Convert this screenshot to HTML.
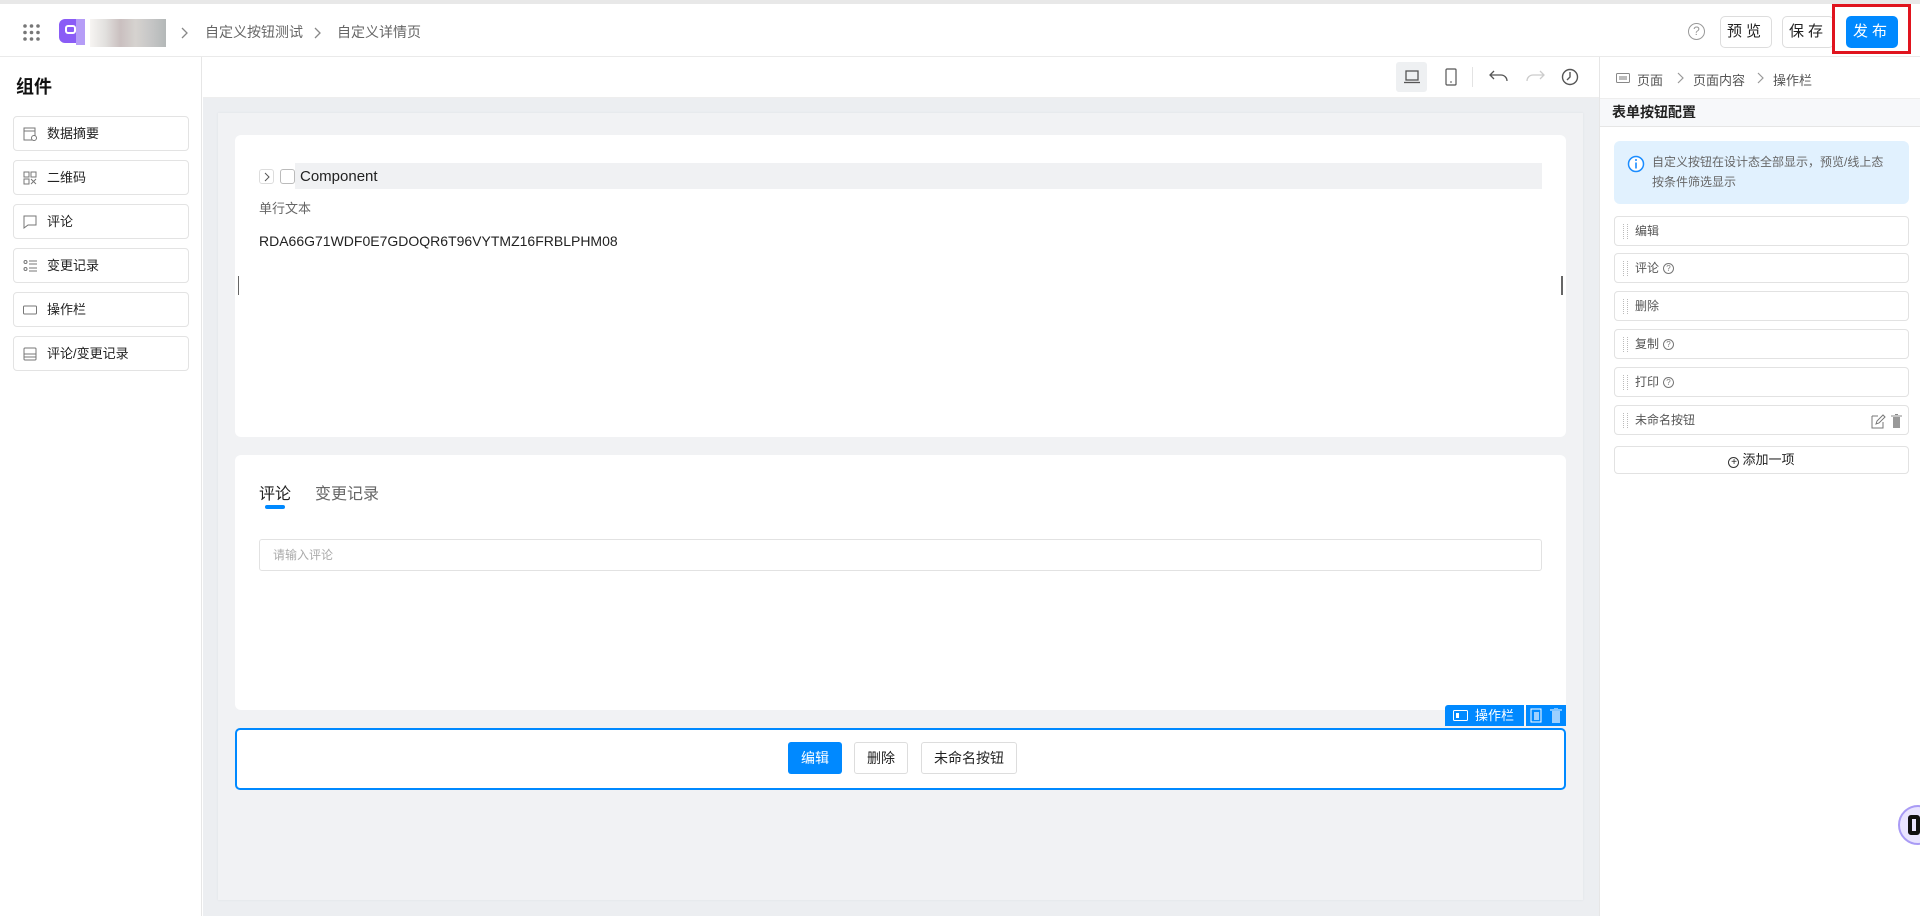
<!DOCTYPE html>
<html><head><meta charset="utf-8"><style>
*{box-sizing:border-box;margin:0;padding:0}
body{width:1920px;height:916px;overflow:hidden;background:#fff;font-family:"Liberation Sans","Noto Sans CJK SC",sans-serif;color:#333;position:relative}
.abs{position:absolute}
.top{left:0;top:0;width:1920px;height:57px;border-top:4px solid #e8e8e8;border-bottom:1px solid #eaeaea;background:#fff}
.crumb{font-size:14px;color:#666;top:18px}
.btn{border:1px solid #ddd;border-radius:5px;font-size:15px;text-align:center;line-height:30px;letter-spacing:4px;color:#222}
.left{left:0;top:57px;width:202px;height:859px;border-right:1px solid #e6e6e6;background:#fff}
.item{left:13px;width:176px;height:35px;border:1px solid #e3e3e3;border-radius:4px;font-size:13px;line-height:33px;padding-left:33px;color:#222}
.item svg{position:absolute;left:9px;top:10px}
.canvas{left:203px;top:98px;width:1396px;height:818px;background:#eceef1}
.card{background:#fff;border-radius:6px}
.right{left:1599px;top:57px;width:321px;height:859px;border-left:1px solid #e6e6e6;background:#fff}
.ritem{left:14px;width:295px;height:30px;border:1px solid #e2e2e2;border-radius:4px;font-size:12px;color:#555;line-height:28px;padding-left:20px}
.ritem:before{content:"";position:absolute;left:8px;top:7px;width:3px;height:15px;border-left:1px dotted #bbb;border-right:1px dotted #bbb}
.q{display:inline-block;width:11px;height:11px;border:1px solid #777;border-radius:50%;font-size:8px;line-height:9px;text-align:center;margin-left:4px;vertical-align:1px;color:#777}
</style></head><body>
<div class="abs top">
  <svg class="abs" style="left:23px;top:20px" width="17" height="17"><g fill="#777"><circle cx="2" cy="2" r="1.8"/><circle cx="8.5" cy="2" r="1.8"/><circle cx="15" cy="2" r="1.8"/><circle cx="2" cy="8.5" r="1.8"/><circle cx="8.5" cy="8.5" r="1.8"/><circle cx="15" cy="8.5" r="1.8"/><circle cx="2" cy="15" r="1.8"/><circle cx="8.5" cy="15" r="1.8"/><circle cx="15" cy="15" r="1.8"/></g></svg>
  <div class="abs" style="left:59px;top:15px;width:24px;height:24px;border-radius:6px;background:#8a5cf6"></div>
  <div class="abs" style="left:65px;top:21px;width:11px;height:9px;border:2px solid #fff;border-radius:3px"></div>
  <div class="abs" style="left:76px;top:15px;width:9px;height:26px;background:#b59cf7"></div>
  <div class="abs" style="left:90px;top:15px;width:76px;height:28px;background:linear-gradient(90deg,#f4f1ee,#d8d6d3,#b8aaaa,#c8c4c0,#b3b3b3,#9aa0a0);opacity:.75"></div>
  <svg class="abs" style="left:181px;top:23px" width="8" height="12"><path d="M1 1l5 5-5 5" fill="none" stroke="#888" stroke-width="1.3"/></svg>
  <div class="abs crumb" style="left:205px">自定义按钮测试</div>
  <svg class="abs" style="left:314px;top:23px" width="8" height="12"><path d="M1 1l5 5-5 5" fill="none" stroke="#888" stroke-width="1.3"/></svg>
  <div class="abs crumb" style="left:337px">自定义详情页</div>
  <div class="abs" style="left:1688px;top:19px;width:17px;height:17px;border:1.5px solid #999;border-radius:50%;font-size:12px;color:#999;text-align:center;line-height:14px">?</div>
  <div class="abs btn" style="left:1720px;top:12px;width:52px;height:32px">预览</div>
  <div class="abs btn" style="left:1782px;top:12px;width:52px;height:32px">保存</div>
  <div class="abs btn" style="left:1846px;top:12px;width:52px;height:32px;background:#0089ff;border-color:#0089ff;color:#fff">发布</div>
  <div class="abs" style="left:1832px;top:0px;width:79px;height:50px;border:3px solid #e0141e"></div>
</div>

<div class="abs left">
  <div class="abs" style="left:16px;top:16px;font-size:18px;font-weight:bold;color:#111">组件</div>
  <div class="abs item" style="top:59px"><svg width="14" height="14"><rect x="1" y="1" width="11" height="12" fill="none" stroke="#777"/><line x1="1" y1="4" x2="12" y2="4" stroke="#777"/><circle cx="11" cy="11" r="2.5" fill="#fff" stroke="#777"/></svg>数据摘要</div>
  <div class="abs item" style="top:103px"><svg width="14" height="14"><g fill="none" stroke="#777"><rect x="1" y="1" width="5" height="5"/><rect x="8" y="1" width="5" height="5"/><rect x="1" y="8" width="5" height="5"/><path d="M8 8l5 5M13 8l-5 5"/></g></svg>二维码</div>
  <div class="abs item" style="top:147px"><svg width="14" height="14"><path d="M1 1h12v9H5l-4 3z" fill="none" stroke="#777"/></svg>评论</div>
  <div class="abs item" style="top:191px"><svg width="14" height="14"><g fill="none" stroke="#777"><circle cx="2.5" cy="3" r="1.5"/><circle cx="2.5" cy="10" r="1.5"/><path d="M6 2h8M6 5h8M6 9h8M6 12h8"/></g></svg>变更记录</div>
  <div class="abs item" style="top:235px"><svg width="14" height="14"><rect x="0.5" y="3" width="13" height="8" rx="1" fill="none" stroke="#777"/></svg>操作栏</div>
  <div class="abs item" style="top:279px"><svg width="14" height="14"><g fill="none" stroke="#777"><rect x="1" y="1" width="12" height="12" rx="1"/><path d="M1 7h12M1 10h12"/></g></svg>评论/变更记录</div>
</div>

<div class="abs" style="left:203px;top:57px;width:1396px;height:41px;background:#fff;border-bottom:1px solid #eee">
  <div class="abs" style="left:1193px;top:5px;width:31px;height:30px;background:#eef0f2;border-radius:3px"></div>
  <svg class="abs" style="left:1200px;top:12px" width="18" height="16"><rect x="3" y="2" width="12" height="9" fill="none" stroke="#555" stroke-width="1.3"/><line x1="1" y1="13.5" x2="17" y2="13.5" stroke="#555" stroke-width="1.3"/></svg>
  <svg class="abs" style="left:1242px;top:11px" width="12" height="18"><rect x="1" y="1" width="10" height="16" rx="1" fill="none" stroke="#555" stroke-width="1.2"/><line x1="5" y1="14" x2="7" y2="14" stroke="#555"/></svg>
  <div class="abs" style="left:1269px;top:10px;width:1px;height:20px;background:#e3e3e3"></div>
  <svg class="abs" style="left:1286px;top:12px" width="20" height="16"><path d="M5 2L1 6l4 4M1 6h11a6 6 0 0 1 6 6" fill="none" stroke="#555" stroke-width="1.3"/></svg>
  <svg class="abs" style="left:1322px;top:12px" width="20" height="16"><path d="M15 2l4 4-4 4M19 6H8a6 6 0 0 0-6 6" fill="none" stroke="#ccc" stroke-width="1.3"/></svg>
  <svg class="abs" style="left:1358px;top:11px" width="18" height="18"><circle cx="9" cy="9" r="7.5" fill="none" stroke="#555" stroke-width="1.4"/><path d="M9 4v5l-3 3" fill="none" stroke="#555" stroke-width="1.4"/></svg>
</div>

<div class="abs canvas">
  <div class="abs" style="left:15px;top:15px;width:1365px;height:787px;background:#f1f2f4;box-shadow:0 0 2px #dde0e4"></div>
  <div class="abs card" style="left:32px;top:37px;width:1331px;height:302px">
    <div class="abs" style="left:60px;top:28px;width:1247px;height:26px;background:#f0f1f3"></div>
    <div class="abs" style="left:24px;top:34px;width:15px;height:15px;border:1px solid #ddd;border-radius:3px;background:#fff"><svg class="abs" style="left:4px;top:2px" width="6" height="10"><path d="M1 1l4 4-4 4" fill="none" stroke="#555"/></svg></div>
    <div class="abs" style="left:45px;top:34px;width:15px;height:15px;border:1.5px solid #bbb;border-radius:3px;background:#fff"></div>
    <div class="abs" style="left:65px;top:33px;font-size:15px;color:#222">Component</div>
    <div class="abs" style="left:24px;top:63px;font-size:13px;color:#666">单行文本</div>
    <div class="abs" style="left:24px;top:98px;font-size:14px;color:#222">RDA66G71WDF0E7GDOQR6T96VYTMZ16FRBLPHM08</div>
    <div class="abs" style="left:3px;top:141px;width:1px;height:19px;background:#666"></div>
    <div class="abs" style="left:1326px;top:141px;width:2px;height:19px;background:#666"></div>
  </div>
  <div class="abs card" style="left:32px;top:357px;width:1331px;height:255px">
    <div class="abs" style="left:24px;top:25px;font-size:16px;color:#222">评论</div>
    <div class="abs" style="left:30px;top:50px;width:20px;height:4px;border-radius:2px;background:#0089ff"></div>
    <div class="abs" style="left:80px;top:25px;font-size:16px;color:#666">变更记录</div>
    <div class="abs" style="left:24px;top:84px;width:1283px;height:32px;border:1px solid #e2e2e2;border-radius:3px;font-size:12px;color:#aaa;line-height:30px;padding-left:13px">请输入评论</div>
  </div>
  <div class="abs" style="left:1242px;top:607px;width:79px;height:21px;background:#0089ff;border-radius:3px 0 0 0;color:#fff;font-size:13px;line-height:21px;padding-left:30px">操作栏</div>
  <svg class="abs" style="left:1250px;top:612px" width="15" height="11"><rect x="0.5" y="0.5" width="14" height="10" rx="1" fill="none" stroke="#fff"/><rect x="3" y="3" width="3" height="5" fill="#fff"/></svg>
  <div class="abs" style="left:1323px;top:607px;width:40px;height:21px;background:#0089ff"></div>
  <svg class="abs" style="left:1327px;top:610px" width="34" height="16"><rect x="1" y="1" width="10" height="13" fill="none" stroke="#fff"/><rect x="4" y="4" width="5" height="8" fill="#9cd0ff"/><rect x="22" y="3" width="8" height="12" fill="#9cd0ff"/><path d="M20 2h12M24 0h4" stroke="#fff"/></svg>
  <div class="abs" style="left:32px;top:630px;width:1331px;height:62px;border:2px solid #0089ff;border-radius:5px;background:#fff">
    <div class="abs" style="left:551px;top:12px;width:54px;height:32px;background:#0089ff;border-radius:3px;color:#fff;font-size:14px;text-align:center;line-height:32px">编辑</div>
    <div class="abs" style="left:617px;top:12px;width:54px;height:32px;border:1px solid #ddd;border-radius:3px;font-size:14px;text-align:center;line-height:30px;color:#222">删除</div>
    <div class="abs" style="left:684px;top:12px;width:96px;height:32px;border:1px solid #ddd;border-radius:3px;font-size:14px;text-align:center;line-height:30px;color:#222">未命名按钮</div>
  </div>
</div>

<div class="abs right">
  <svg class="abs" style="left:16px;top:16px" width="14" height="10"><rect x="0.5" y="0.5" width="13" height="9" rx="1" fill="none" stroke="#888"/><rect x="3" y="3" width="8" height="4" fill="#bbb"/></svg>
  <div class="abs" style="left:37px;top:13px;font-size:13px;color:#555">页面</div>
  <svg class="abs" style="left:77px;top:15px" width="8" height="12"><path d="M1 1l5 5-5 5" fill="none" stroke="#999" stroke-width="1.2"/></svg>
  <div class="abs" style="left:93px;top:13px;font-size:13px;color:#555">页面内容</div>
  <svg class="abs" style="left:157px;top:15px" width="8" height="12"><path d="M1 1l5 5-5 5" fill="none" stroke="#999" stroke-width="1.2"/></svg>
  <div class="abs" style="left:173px;top:13px;font-size:13px;color:#555">操作栏</div>
  <div class="abs" style="left:0;top:41px;width:321px;height:29px;background:#f7f8fa;border-top:1px solid #eee;border-bottom:1px solid #e6e6e6;font-size:14px;font-weight:bold;color:#222;line-height:27px;padding-left:12px">表单按钮配置</div>
  <div class="abs" style="left:14px;top:84px;width:295px;height:63px;background:#e1f1fe;border-radius:6px;font-size:12px;color:#666;line-height:20px;padding:11px 24px 0 38px">自定义按钮在设计态全部显示，预览/线上态按条件筛选显示</div>
  <svg class="abs" style="left:27px;top:98px" width="18" height="18"><circle cx="9" cy="9" r="7.5" fill="#fff" stroke="#1a8cff" stroke-width="1.5"/><rect x="8.2" y="7.5" width="1.6" height="6" fill="#1a8cff"/><circle cx="9" cy="5" r="1" fill="#1a8cff"/></svg>
  <div class="abs ritem" style="top:159px">编辑</div>
  <div class="abs ritem" style="top:196px">评论<span class="q">?</span></div>
  <div class="abs ritem" style="top:234px">删除</div>
  <div class="abs ritem" style="top:272px">复制<span class="q">?</span></div>
  <div class="abs ritem" style="top:310px">打印<span class="q">?</span></div>
  <div class="abs ritem" style="top:348px">未命名按钮
    <svg class="abs" style="left:256px;top:8px" width="32" height="15"><path d="M1 2h6M1 2v12h11V8M5 10l1-3 6-6 2 2-6 6z" fill="none" stroke="#777"/><rect x="22" y="3" width="7" height="11" fill="#999"/><path d="M20 2h11M24 0.5h3" stroke="#888"/></svg></div>
  <div class="abs" style="left:14px;top:389px;width:295px;height:28px;border:1px solid #e2e2e2;border-radius:4px;font-size:13px;text-align:center;line-height:26px;color:#222"><span style="display:inline-block;width:11px;height:11px;border:1px solid #333;border-radius:50%;font-size:10px;line-height:9px;vertical-align:-1px;margin-right:3px">+</span>添加一项</div>
</div>
<div class="abs" style="left:1898px;top:805px;width:40px;height:40px;border-radius:50%;background:#e9e4ff;border:2px solid #a99bf5"></div>
<div class="abs" style="left:1908px;top:815px;width:12px;height:20px;border:4px solid #111;border-radius:3px"></div>
</body></html>
